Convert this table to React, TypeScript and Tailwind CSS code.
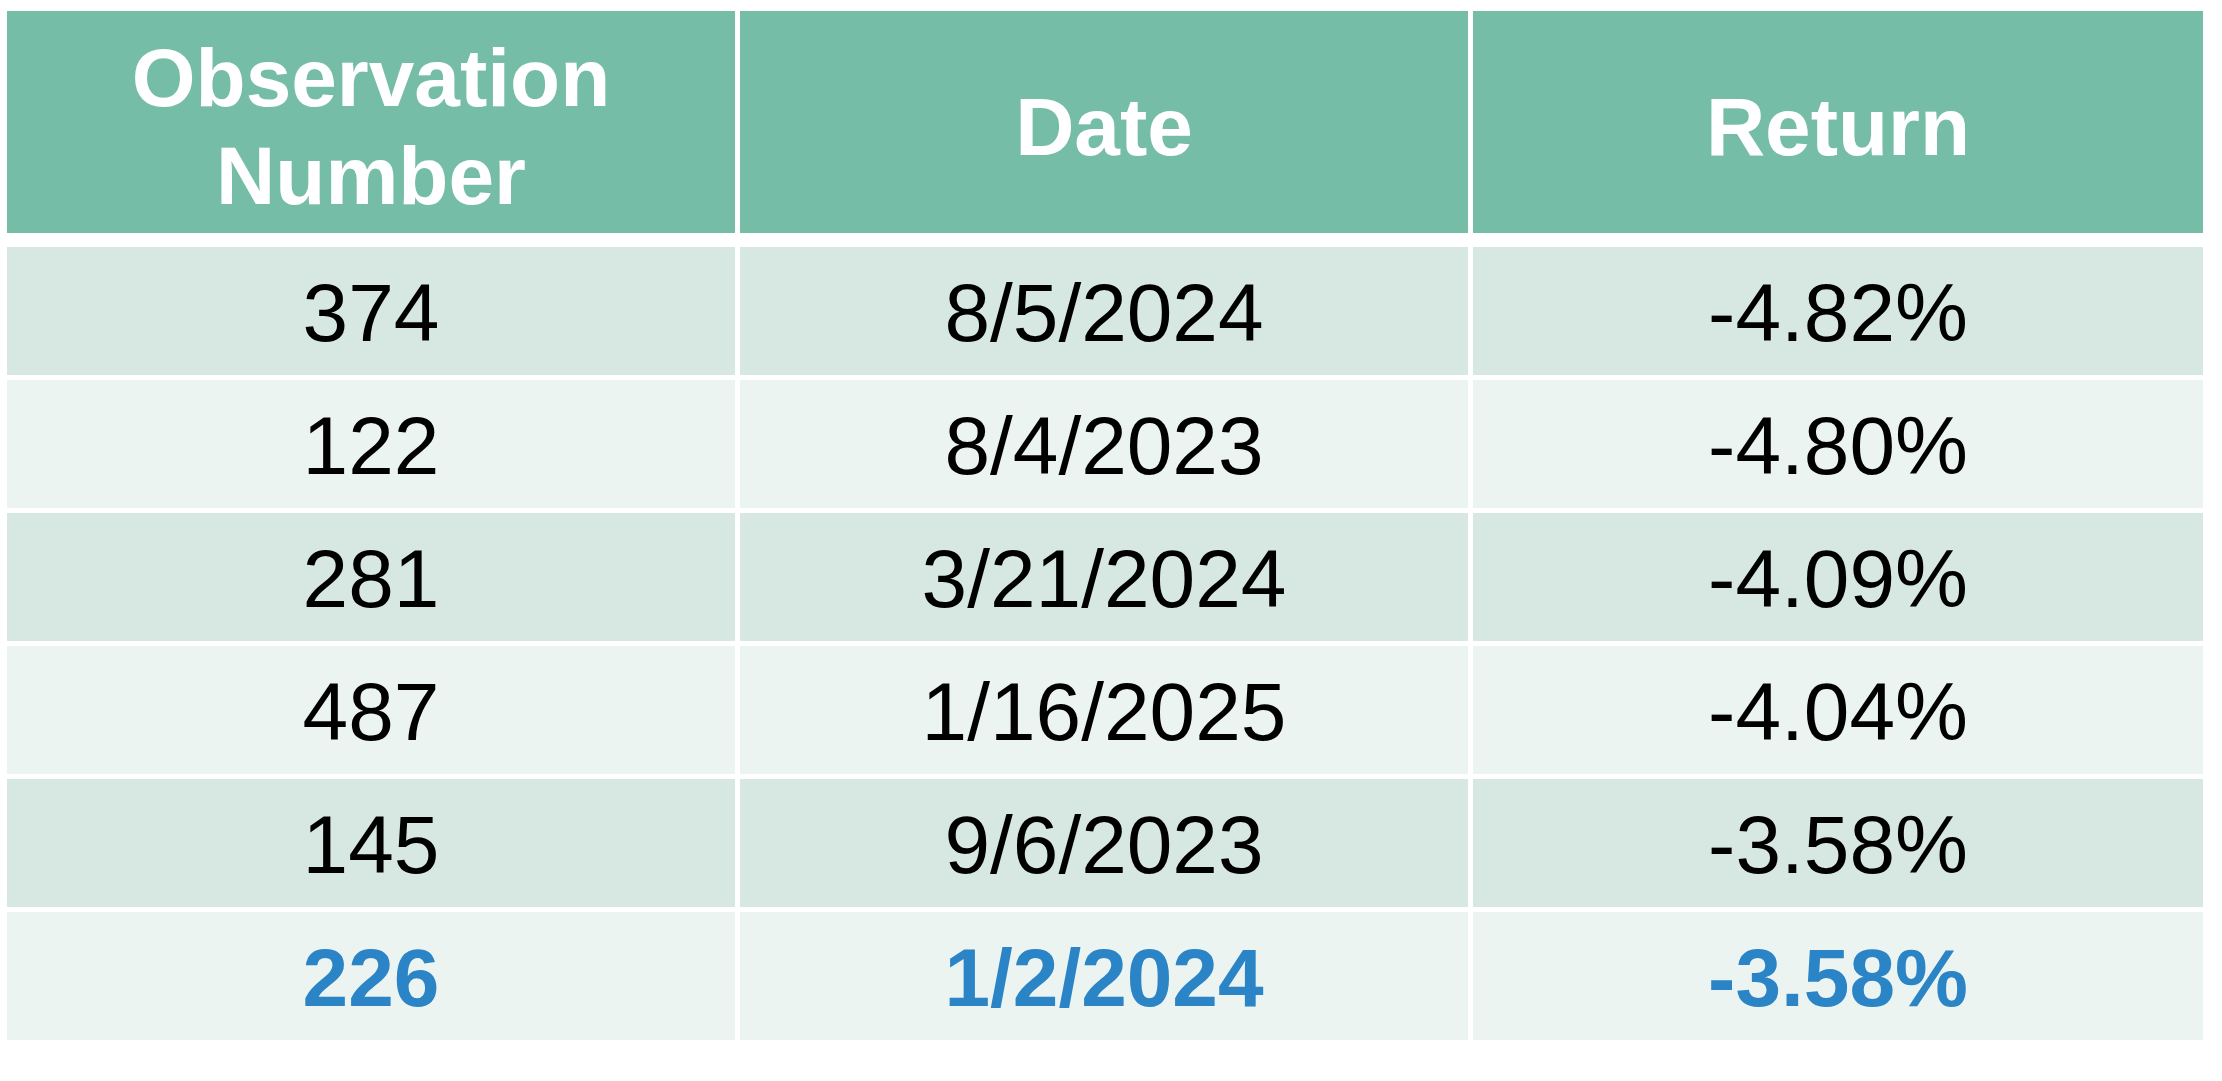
const rows = [
  { obs: "374", date: "8/5/2024", ret: "-4.82%" },
  { obs: "122", date: "8/4/2023", ret: "-4.80%" },
  { obs: "281", date: "3/21/2024", ret: "-4.09%" },
  { obs: "487", date: "1/16/2025", ret: "-4.04%" },
  { obs: "145", date: "9/6/2023", ret: "-3.58%" },
  { obs: "226", date: "1/2/2024", ret: "-3.58%", highlight: true },
];

function HeaderCell({ children }: { children: React.ReactNode }) {
  return (
    <div className="flex h-[222px] items-center justify-center bg-[#76bda8] pt-[10px] text-center text-[82px] font-bold leading-[98px] text-white">
      {children}
    </div>
  );
}

function BodyCell({
  children,
  shade,
  highlight,
}: {
  children: React.ReactNode;
  shade: boolean;
  highlight?: boolean;
}) {
  return (
    <div
      className={
        "flex h-[128px] items-center justify-center pt-[3px] text-[82px] leading-none " +
        (shade ? "bg-[#d7e8e2] " : "bg-[#ebf4f1] ") +
        (highlight ? "font-bold text-[#2a84c6]" : "text-black")
      }
    >
      {children}
    </div>
  );
}

export default function App() {
  return (
    <div
      className="h-[1081px] w-[2222px] bg-white pl-[7px] pt-[11px]"
      style={{ fontFamily: '"Liberation Sans", Arial, sans-serif' }}
    >
      <div className="grid grid-cols-[728px_728px_730px] gap-x-[5px]">
        <HeaderCell>
          Observation
          <br />
          Number
        </HeaderCell>
        <HeaderCell>Date</HeaderCell>
        <HeaderCell>Return</HeaderCell>
      </div>
      <div className="mt-[14px] grid grid-cols-[728px_728px_730px] gap-x-[5px] gap-y-[5px]">
        {rows.map((r, i) => (
          <div key={i} className="contents">
            <BodyCell shade={i % 2 === 0} highlight={r.highlight}>
              {r.obs}
            </BodyCell>
            <BodyCell shade={i % 2 === 0} highlight={r.highlight}>
              {r.date}
            </BodyCell>
            <BodyCell shade={i % 2 === 0} highlight={r.highlight}>
              {r.ret}
            </BodyCell>
          </div>
        ))}
      </div>
    </div>
  );
}
